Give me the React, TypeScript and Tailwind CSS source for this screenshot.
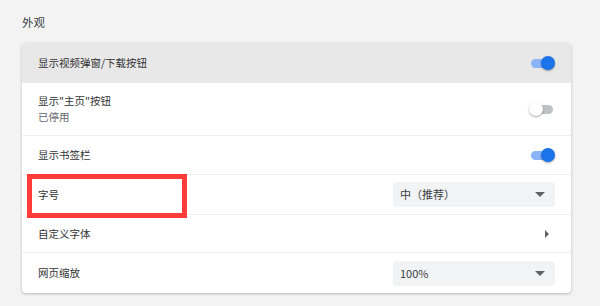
const font = { fontFamily: '"Noto Sans CJK SC", "Liberation Sans", sans-serif' }

const Toggle = ({ on }: { on: boolean }) => {
  return (
    <div className="relative w-[26px] h-[14px] flex items-center">
      <div className={`w-[22px] h-[9px] rounded-full ml-[2px] ${on ? "bg-[#8ab4f8]" : "bg-[#bdc1c6]"}`} />
      <div
        className={`absolute top-0 w-[14px] h-[14px] rounded-full shadow-[0_1px_2px_rgba(0,0,0,0.35)] ${
          on ? "right-0 bg-[#1a73e8]" : "left-0 bg-white"
        }`}
      />
    </div>
  )
}

const Select = ({ value }: { value: string }) => {
  return (
    <div className="w-[162px] h-[25px] rounded-[4px] bg-[#f1f3f4] flex items-center justify-between pl-[7px] pr-[10px] text-[11px] text-[#3c4043]">
      <span>{value}</span>
      <svg width="10" height="5" viewBox="0 0 10 5">
        <path d="M0 0 L10 0 L5 5 Z" fill="#5f6368" />
      </svg>
    </div>
  )
}

const App = () => {
  return (
    <div style={font} className="w-[600px] h-[306px] bg-[#f3f3f3] pt-[14px] pl-[22px] overflow-hidden">
      <h3 className="text-[11.5px] text-[#3c4043] leading-[16px]">外观</h3>

      <div className="mt-[13px] w-[549px] bg-white rounded-[4px] shadow-[0_1px_3px_rgba(0,0,0,0.25)] overflow-hidden text-[10.5px] text-[#333]">
        <div className="h-[40px] bg-[#e8e8e8] flex items-center justify-between pl-[16px] pr-[16px]">
          <span>显示视频弹窗/下载按钮</span>
          <Toggle on />
        </div>

        <div className="h-[53px] flex items-center justify-between pl-[16px] pr-[16px] border-b border-[#eeeeee]">
          <div className="flex flex-col leading-[16px]">
            <span>显示"主页"按钮</span>
            <span className="text-[#5f6368]">已停用</span>
          </div>
          <Toggle on={false} />
        </div>

        <div className="h-[39px] flex items-center justify-between pl-[16px] pr-[16px] border-b border-[#eeeeee]">
          <span>显示书签栏</span>
          <Toggle on />
        </div>

        <div className="relative h-[40px] flex items-center justify-between pl-[16px] pr-[16px] border-b border-[#eeeeee]">
          <span>字号</span>
          <Select value="中（推荐）" />
          <div className="absolute left-[5px] top-[-1px] w-[160px] h-[44px] border-[5px] border-[#ff3b3b]" />
        </div>

        <div className="h-[38px] flex items-center justify-between pl-[16px] pr-[22px] border-b border-[#eeeeee]">
          <span>自定义字体</span>
          <svg width="4" height="8" viewBox="0 0 4 8">
            <path d="M0 0 L4 4 L0 8 Z" fill="#5f6368" />
          </svg>
        </div>

        <div className="h-[40px] flex items-center justify-between pl-[16px] pr-[16px]">
          <span>网页缩放</span>
          <Select value="100%" />
        </div>
      </div>
    </div>
  )
}

export default App
